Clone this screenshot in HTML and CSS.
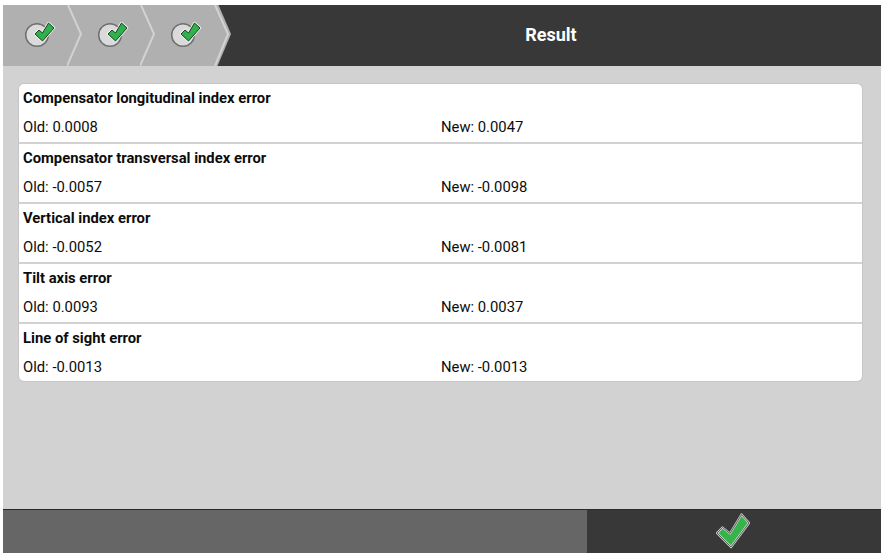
FILE: index.html
```html
<!DOCTYPE html>
<html lang="en">
<head>
<meta charset="utf-8">
<title>Result</title>
<link rel="stylesheet" href="styles.css">
</head>
<body>
<svg class="defs" width="0" height="0" aria-hidden="true">
  <defs>
    <symbol id="done" viewBox="0 0 36 32">
      <circle cx="15" cy="16" r="11.3" fill="#dadada" stroke="#707070" stroke-width="1.5"/>
      <path d="M26.5 4 L32 9 L20.5 22 L13 15 L17 11 L20.5 14 Z" fill="#eeeeee" stroke="#eeeeee" stroke-width="2.6" stroke-linejoin="round"/>
      <path d="M26.5 4 L32 9 L20.5 22 L13 15 L17 11 L20.5 14 Z" fill="#2fb24b" stroke="#1c3d24" stroke-width="1" stroke-linejoin="round"/>
    </symbol>
  </defs>
</svg>
<main class="app">
  <header class="top">
    <nav class="steps">
      <div class="step"><svg class="step-icon"><use href="#done"/></svg><svg class="chev" viewBox="0 0 16 61" preserveAspectRatio="none"><path d="M1 0 L14 29 L0 61" fill="none" stroke="#d2d2d2" stroke-width="2"/></svg></div>
      <div class="step"><svg class="step-icon"><use href="#done"/></svg><svg class="chev" viewBox="0 0 16 61" preserveAspectRatio="none"><path d="M1 0 L14 29 L0 61" fill="none" stroke="#d2d2d2" stroke-width="2"/></svg></div>
      <div class="step"><svg class="step-icon"><use href="#done"/></svg><svg class="chev" viewBox="0 0 16 61" preserveAspectRatio="none"><path d="M2 0 L15 29 L2 61" fill="none" stroke="#d2d2d2" stroke-width="2"/></svg></div>
    </nav>
    <h1 class="title">Result</h1>
  </header>
  <section class="content">
    <div class="card">
      <div class="row">
        <div class="name">Compensator longitudinal index error</div>
        <div class="vals"><span>Old: 0.0008</span><span>New: 0.0047</span></div>
      </div>
      <div class="row">
        <div class="name">Compensator transversal index error</div>
        <div class="vals"><span>Old: -0.0057</span><span>New: -0.0098</span></div>
      </div>
      <div class="row">
        <div class="name">Vertical index error</div>
        <div class="vals"><span>Old: -0.0052</span><span>New: -0.0081</span></div>
      </div>
      <div class="row">
        <div class="name">Tilt axis error</div>
        <div class="vals"><span>Old: 0.0093</span><span>New: 0.0037</span></div>
      </div>
      <div class="row">
        <div class="name">Line of sight error</div>
        <div class="vals"><span>Old: -0.0013</span><span>New: -0.0013</span></div>
      </div>
    </div>
  </section>
  <footer class="bottom">
    <div class="spare"></div>
    <button class="ok" type="button" aria-label="Confirm">
      <svg class="ok-icon" viewBox="0 0 36 36"><path d="M1 20 L6.5 14.5 L14 20.5 L25.5 1.5 L33 10 L15 34 Z" fill="#35b44a" stroke="#d4d4d4" stroke-width="2.2" stroke-linejoin="round"/><path d="M1 20 L6.5 14.5 L14 20.5 L25.5 1.5 L33 10 L15 34 Z" fill="none" stroke="#2a2a2a" stroke-width="0.7" stroke-linejoin="round"/></svg>
    </button>
  </footer>
</main>
</body>
</html>
```
FILE: styles.css
```css
* { box-sizing: border-box; }
html, body { height: 100%; }
body {
  margin: 0;
  padding: 5px 2px 2px 3px;
  background: #fff;
  font-family: Roboto, "Liberation Sans", sans-serif;
  font-size: 14.8px;
  color: #0c0c0c;
}
.defs { position: absolute; }
.app {
  height: 548px;
  display: flex;
  flex-direction: column;
  background: #d2d2d2;
}
.top {
  height: 61px;
  flex: none;
  display: flex;
  align-items: center;
  background: #383838;
}
.steps {
  width: 229px;
  height: 100%;
  flex: none;
  display: flex;
  background: #b0b0b0;
  clip-path: polygon(0 0, 215.5px 0, 228px 29px, 214.5px 100%, 0 100%);
}
.step {
  position: relative;
  width: 73px;
  flex: none;
  display: flex;
  align-items: center;
  padding-left: 19px;
}
.step-icon { width: 36px; height: 32px; margin-top: -1px; }
.chev {
  position: absolute;
  left: 64px;
  top: 0;
  width: 16px;
  height: 61px;
}
.title {
  flex: 1;
  margin: 0 0 2px;
  padding-right: 11px;
  text-align: center;
  color: #fff;
  font-size: 18px;
  font-weight: 700;
}
.content {
  flex: 1;
  padding: 18px 19px 0 16px;
}
.card {
  background: #fff;
  border-radius: 5px;
  overflow: hidden;
  box-shadow: 0 0 0 1px #c6c6c6;
}
.row {
  height: 60px;
  padding: 0 4px;
  border-bottom: 2px solid #d2d2d2;
}
.row:last-child { height: 57px; border-bottom: 0; }
.name {
  height: 29px;
  padding-top: 6px;
  line-height: 17px;
  font-weight: 700;
}
.vals {
  display: grid;
  grid-template-columns: 418px 1fr;
  padding-top: 6px;
  line-height: 17px;
}
.bottom {
  height: 44px;
  flex: none;
  display: flex;
  border-top: 1px solid #2a2a2a;
}
.spare {
  width: 584px;
  flex: none;
  background: #666;
}
.ok {
  flex: 1;
  padding: 0;
  border: 0;
  background: #383838;
  display: flex;
  align-items: center;
  justify-content: center;
}
.ok-icon { width: 36px; height: 36px; margin-top: -1px; overflow: visible; }
```
